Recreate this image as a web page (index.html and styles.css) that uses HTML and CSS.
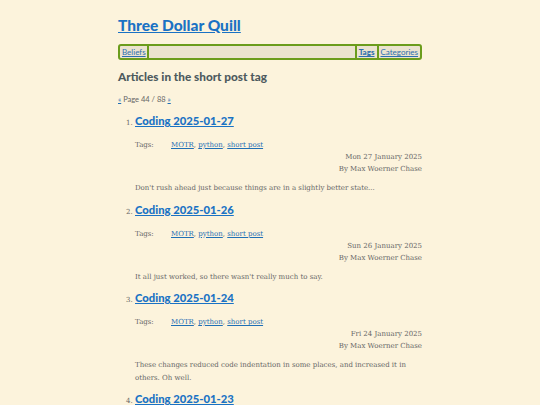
FILE: index.html
```html
<!DOCTYPE html>
<html>
<head>
<meta charset="utf-8">
<title>Three Dollar Quill</title>
<link rel="stylesheet" href="styles.css">
</head>
<body>
<div class="page">
  <header class="site-header">
    <h1 class="site-title"><a href="#">Three Dollar Quill</a></h1>
    <nav class="nav">
      <a class="nav-item nav-left" href="#">Beliefs</a>
      <span class="nav-spacer"></span>
      <a class="nav-item nav-current" href="#">Tags</a>
      <a class="nav-item nav-last" href="#">Categories</a>
    </nav>
  </header>
  <main>
    <h2 class="page-heading">Articles in the short post tag</h2>
    <p class="pager"><a href="#">«</a> Page 44 / 88 <a href="#">»</a></p>
    <ol class="articles" start="1">
      <li class="article">
        <h3 class="article-title"><a href="#">Coding 2025-01-27</a></h3>
        <div class="tags"><span class="tags-label">Tags:</span><span class="tags-list"><a href="#">MOTR</a>, <a href="#">python</a>, <a href="#">short post</a></span></div>
        <div class="meta"><div>Mon 27 January 2025</div><div>By Max Woerner Chase</div></div>
        <p class="summary">Don't rush ahead just because things are in a slightly better state...</p>
      </li>
      <li class="article">
        <h3 class="article-title"><a href="#">Coding 2025-01-26</a></h3>
        <div class="tags"><span class="tags-label">Tags:</span><span class="tags-list"><a href="#">MOTR</a>, <a href="#">python</a>, <a href="#">short post</a></span></div>
        <div class="meta"><div>Sun 26 January 2025</div><div>By Max Woerner Chase</div></div>
        <p class="summary">It all just worked, so there wasn't really much to say.</p>
      </li>
      <li class="article">
        <h3 class="article-title"><a href="#">Coding 2025-01-24</a></h3>
        <div class="tags"><span class="tags-label">Tags:</span><span class="tags-list"><a href="#">MOTR</a>, <a href="#">python</a>, <a href="#">short post</a></span></div>
        <div class="meta"><div>Fri 24 January 2025</div><div>By Max Woerner Chase</div></div>
        <p class="summary">These changes reduced code indentation in some places, and increased it in others. Oh well.</p>
      </li>
      <li class="article">
        <h3 class="article-title"><a href="#">Coding 2025-01-23</a></h3>
      </li>
    </ol>
  </main>
</div>
</body>
</html>
```
FILE: styles.css
```css
html, body {
  margin: 0;
  padding: 0;
  background: #fcf3dc;
}
body {
  font-family: "DejaVu Serif", serif;
  color: #666666;
}
a {
  color: #1f6fb5;
}
.page {
  width: 304px;
  margin: 0 auto;
}
.site-header {
  padding-top: 14px;
}
.site-title {
  margin: 0;
  font-family: Lato, "Open Sans", sans-serif;
  font-size: 15.5px;
  font-weight: 900;
  line-height: 22px;
}
.site-title a {
  color: #1a72c4;
}
.nav {
  margin-top: 8px;
  display: flex;
  align-items: stretch;
  border: 2px solid #6b9c1c;
  border-radius: 3px;
  background: #ebe3cf;
  font-family: Lato, sans-serif;
  font-size: 8px;
  line-height: 12px;
}
.nav-item {
  padding: 0 2px;
  color: #2c6fae;
}
.nav-left {
  border-right: 2px solid #6b9c1c;
  padding-right: 1px;
}
.nav-spacer {
  flex: 1;
}
.nav-current {
  font-weight: 900;
  border-left: 2px solid #6b9c1c;
  border-right: 2px solid #6b9c1c;
}
.page-heading {
  margin: 9px 0 0;
  font-family: Lato, sans-serif;
  font-size: 11.75px;
  font-weight: 900;
  line-height: 16px;
  color: #4d5a5e;
}
.pager {
  margin: 10px 0 0;
  font-family: Lato, sans-serif;
  font-size: 7.5px;
  line-height: 10px;
  color: #666;
}
.articles {
  margin: 8px 0 0;
  padding-left: 17px;
  font-size: 7px;
}
.article {
  margin: 0;
}
.article::marker {
  font-size: 7px;
}
.article-title {
  margin: 0;
  font-family: Lato, sans-serif;
  font-size: 11.25px;
  line-height: 16px;
  font-weight: 900;
}
.article-title a {
  color: #1a72c4;
}
.tags {
  display: flex;
  margin-top: 10px;
  line-height: 12px;
}
.tags-label {
  width: 36px;
}
.meta {
  text-align: right;
  line-height: 12px;
}
.summary {
  margin: 7px 0 7px;
  line-height: 12.5px;
}
```
